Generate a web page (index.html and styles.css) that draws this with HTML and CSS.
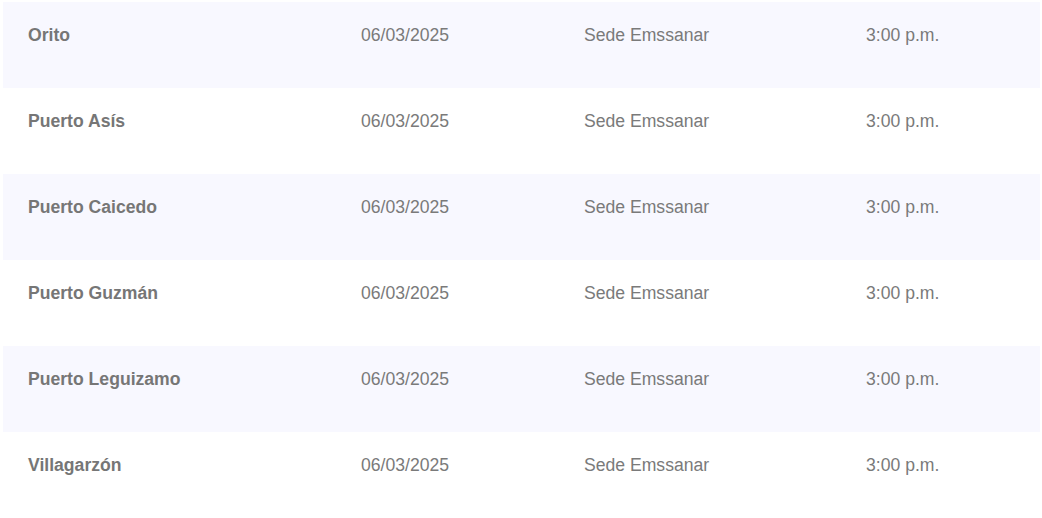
FILE: index.html
```html
<!DOCTYPE html>
<html lang="es">
<head>
<meta charset="utf-8">
<title>Sedes</title>
<link rel="stylesheet" href="styles.css">
</head>
<body>
<div class="wrap">
<table class="schedule">
<colgroup>
<col class="c1"><col class="c2"><col class="c3"><col class="c4">
</colgroup>
<tbody>
<tr><td class="city">Orito</td><td>06/03/2025</td><td>Sede Emssanar</td><td>3:00 p.m.</td></tr>
<tr><td class="city">Puerto Asís</td><td>06/03/2025</td><td>Sede Emssanar</td><td>3:00 p.m.</td></tr>
<tr><td class="city">Puerto Caicedo</td><td>06/03/2025</td><td>Sede Emssanar</td><td>3:00 p.m.</td></tr>
<tr><td class="city">Puerto Guzmán</td><td>06/03/2025</td><td>Sede Emssanar</td><td>3:00 p.m.</td></tr>
<tr><td class="city">Puerto Leguizamo</td><td>06/03/2025</td><td>Sede Emssanar</td><td>3:00 p.m.</td></tr>
<tr><td class="city">Villagarzón</td><td>06/03/2025</td><td>Sede Emssanar</td><td>3:00 p.m.</td></tr>
</tbody>
</table>
</div>
</body>
</html>
```
FILE: styles.css
```css
html, body {
  margin: 0;
  background: #ffffff;
}
.wrap {
  padding: 2px 2px 0 3px;
}
.schedule {
  width: 100%;
  border-collapse: collapse;
  table-layout: fixed;
  font-family: "Liberation Sans", Arial, sans-serif;
  font-size: 17.6px;
  line-height: 26px;
  color: #7a7a7a;
}
.c1 { width: 333px; }
.c2 { width: 223px; }
.c3 { width: 282px; }
.c4 { width: auto; }
.schedule tr {
  height: 86px;
}
.schedule tr:nth-child(odd) {
  background: #f8f8ff;
}
.schedule td {
  padding: 20px 25px 40px;
  vertical-align: top;
  white-space: nowrap;
}
.schedule td.city {
  font-weight: bold;
  color: #767676;
}
```
